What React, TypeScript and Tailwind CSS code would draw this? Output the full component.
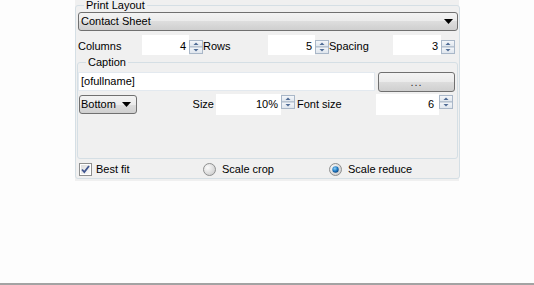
import React from 'react';

const Spinner = () => (
  <svg width="14" height="14" viewBox="0 0 14 14" className="block shrink-0">
    <defs>
      <linearGradient id="spinGrad" x1="0" y1="0" x2="0" y2="1">
        <stop offset="0" stopColor="#f6f8fb" />
        <stop offset="1" stopColor="#dde4ec" />
      </linearGradient>
    </defs>
    <rect x="0.5" y="0.5" width="13" height="6.5" fill="url(#spinGrad)" stroke="#a9b7c8" />
    <rect x="0.5" y="7" width="13" height="6.5" fill="url(#spinGrad)" stroke="#a9b7c8" />
    <path d="M4.5 5 L7 2.5 L9.5 5 Z" fill="#4f6b95" />
    <path d="M4.5 9 L7 11.5 L9.5 9 Z" fill="#4f6b95" />
  </svg>
);

const ComboArrow = () => (
  <svg width="9" height="5" viewBox="0 0 9 5" className="block shrink-0">
    <path d="M0 0 H9 L4.5 5 Z" fill="#000" />
  </svg>
);

const CheckBox = () => (
  <svg width="13" height="13" viewBox="0 0 13 13" className="block shrink-0">
    <defs>
      <linearGradient id="chkGrad" x1="0" y1="0" x2="1" y2="1">
        <stop offset="0" stopColor="#dcdcdc" />
        <stop offset="1" stopColor="#fbfbfb" />
      </linearGradient>
    </defs>
    <rect x="0.5" y="0.5" width="12" height="12" fill="#fff" stroke="#8e8f8f" />
    <rect x="2" y="2" width="9" height="9" fill="url(#chkGrad)" />
    <path d="M3 6.5 L5.3 9 L10 3" fill="none" stroke="#3f5590" strokeWidth="1.8" />
  </svg>
);

const Radio = ({ checked }: { checked?: boolean }) => (
  <svg width="13" height="13" viewBox="0 0 13 13" className="block shrink-0">
    <defs>
      <radialGradient id="radGrad" cx="0.35" cy="0.35" r="0.7">
        <stop offset="0" stopColor="#fbfbfb" />
        <stop offset="1" stopColor="#cfcfcf" />
      </radialGradient>
      <radialGradient id="dotGrad" cx="0.4" cy="0.35" r="0.7">
        <stop offset="0" stopColor="#8fd2f8" />
        <stop offset="0.6" stopColor="#1c76c0" />
        <stop offset="1" stopColor="#0f3f75" />
      </radialGradient>
    </defs>
    <circle cx="6.5" cy="6.5" r="6" fill="url(#radGrad)" stroke="#8e8f8f" />
    {checked && <circle cx="6.5" cy="6.5" r="3.2" fill="url(#dotGrad)" />}
  </svg>
);

const NumField = ({ label, value, labelW, boxW }: { label: string; value: string; labelW: string; boxW: string }) => (
  <div className="flex items-center h-[20px]">
    <div className={`${labelW} leading-[13px] pt-[2px]`}>{label}</div>
    <div className={`${boxW} h-[20px] bg-white flex items-center justify-end pr-[3px] pt-[2px] leading-[13px]`}>{value}</div>
    <div className="self-end mb-[1px]">
      <Spinner />
    </div>
  </div>
);

export default function App() {
  return (
    <div className="w-[534px] h-[285px] bg-[#fdfdfd] flex flex-col font-['Liberation_Sans',Arial,sans-serif] text-[11px] text-black overflow-hidden">
      <div className="ml-[75px] w-[384px] h-[182px] -mt-[1px] bg-[#f0f0f0]">
        <fieldset className="w-[384px] h-[180px] border border-[#d5dfe5] rounded-[3px]">
          <legend className="ml-[8px] px-[2px] leading-[13px]">Print Layout</legend>
          <div className="h-[165px] flex flex-col pl-[2px] pr-[1px]">
            {/* layout type */}
            <div className="h-[19px] w-[380px] rounded-[3px] border border-[#707070] bg-[linear-gradient(#f3f3f3,#ebebeb_50%,#dddddd_50%,#cfcfcf)] flex items-center justify-between pl-[2px] pr-[4px]">
              <span className="leading-[13px]">Contact Sheet</span>
              <ComboArrow />
            </div>

            {/* grid */}
            <div className="mt-[4px] flex">
              <NumField label="Columns" value="4" labelW="w-[64px]" boxW="w-[47px]" />
              <NumField label="Rows" value="5" labelW="w-[65px]" boxW="w-[47px]" />
              <NumField label="Spacing" value="3" labelW="w-[64px]" boxW="w-[48px]" />
            </div>

            {/* caption */}
            <fieldset className="mt-[1px] mb-[3px] -ml-[1px] w-[381px] flex-1 border border-[#d5dfe5] rounded-[3px]">
              <legend className="ml-[8px] px-[2px] leading-[13px]">Caption</legend>
              <div className="mt-[3px] flex items-start gap-[3px]">
                <div className="w-[297px] h-[19px] bg-white border border-[#e3e9ef] flex items-center pl-[2px] leading-[13px]">[ofullname]</div>
                <div className="w-[77px] h-[20px] rounded-[3px] border border-[#707070] bg-[linear-gradient(#f3f3f3,#ebebeb_50%,#dddddd_50%,#cfcfcf)] flex items-center justify-center leading-[13px] text-[#303030] tracking-[1px]">
                  ...
                </div>
              </div>
              <div className="mt-[2px] flex items-center h-[21px]">
                <div className="ml-[1px] w-[58px] h-[19px] rounded-[3px] border border-[#707070] bg-[linear-gradient(#f3f3f3,#ebebeb_50%,#dddddd_50%,#cfcfcf)] flex items-center justify-between pl-[1px] pr-[5px]">
                  <span className="leading-[13px]">Bottom</span>
                  <ComboArrow />
                </div>
                <div className="w-[79px] text-right pr-[2px] leading-[13px]">Size</div>
                <div className="w-[65px] h-[21px] bg-white flex items-center justify-end pr-[3px] leading-[13px]">10%</div>
                <div className="self-start mt-[1px]">
                  <Spinner />
                </div>
                <div className="w-[81px] pl-[2px] leading-[13px]">Font size</div>
                <div className="w-[63px] h-[21px] bg-white flex items-center justify-end pr-[5px] leading-[13px]">6</div>
                <div className="self-start mt-[1px]">
                  <Spinner />
                </div>
              </div>
            </fieldset>

            {/* scaling */}
            <div className="flex items-center h-[14px] mb-[1px]">
              <div className="w-[125px] flex items-center gap-[4px] pl-[1px]">
                <CheckBox />
                <span className="leading-[13px]">Best fit</span>
              </div>
              <div className="w-[126px] flex items-center gap-[6px]">
                <Radio />
                <span className="leading-[13px]">Scale crop</span>
              </div>
              <div className="flex items-center gap-[6px]">
                <Radio checked />
                <span className="leading-[13px]">Scale reduce</span>
              </div>
            </div>
          </div>
        </fieldset>
      </div>
      <div className="flex-1" />
      <div className="h-[2px] bg-[#a3a3a3]" />
    </div>
  );
}
